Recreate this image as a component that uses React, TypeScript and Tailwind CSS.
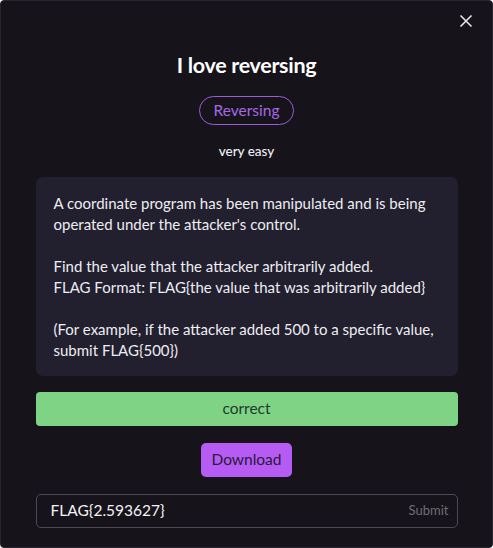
import React from 'react';

const App: React.FC = () => {
  return (
    <div
      className="w-[493px] h-[548px] bg-[#16141a] border border-[#27252d] rounded-[4px] relative flex flex-col items-center text-white"
      style={{ fontFamily: 'Lato, "Noto Sans", sans-serif' }}
    >
      {/* close */}
      <button className="absolute top-[13px] right-[19px] w-[14px] h-[14px] text-[#e6e6ea]">
        <svg viewBox="0 0 14 14" width="14" height="14" fill="none" stroke="currentColor" strokeWidth="1.6">
          <path d="M1.5 1.5 L12.5 12.5 M12.5 1.5 L1.5 12.5" />
        </svg>
      </button>

      <h1 className="mt-[49px] text-[21.5px] leading-[30px] font-bold tracking-[-0.3px]">I love reversing</h1>

      <div className="mt-[16px] h-[29px] px-[14px] flex items-center rounded-full border border-[#9c5bdb] text-[#a768e6] text-[15.5px]">
        Reversing
      </div>

      <div className="mt-[17px] text-[13.5px] leading-[18px] font-medium text-[#eeeef2]">very easy</div>

      <div className="mt-[17px] w-[422px] bg-[#221f2e] rounded-[7px] px-[18px] pt-[16px] pb-[15px] text-[15px] leading-[21px] text-[#ededf2]">
        <p>A coordinate program has been manipulated and is being operated under the attacker's control.</p>
        <p className="mt-[21px]">Find the value that the attacker arbitrarily added.</p>
        <p>FLAG Format: FLAG{'{'}the value that was arbitrarily added{'}'}</p>
        <p className="mt-[21px]">(For example, if the attacker added 500 to a specific value, submit FLAG{'{'}500{'}'})</p>
      </div>

      <div className="mt-[16px] w-[422px] h-[34px] bg-[#7ed384] rounded-[4px] flex items-center justify-center text-[15.5px] text-[#1e3a2a]">
        correct
      </div>

      <button className="mt-[17px] h-[34px] px-[10px] bg-[#b65cf5] rounded-[5px] text-[15.5px] text-[#2a1838]">
        Download
      </button>

      <div className="mt-[17px] w-[422px] h-[34px] border border-[#4b4953] rounded-[5px] flex items-center justify-between pl-[14px] pr-[8px]">
        <span className="text-[15.5px] text-[#f2f2f5]">FLAG{'{'}2.593627{'}'}</span>
        <span className="text-[13px] text-[#6e6d75]">Submit</span>
      </div>
    </div>
  );
};

export default App;
